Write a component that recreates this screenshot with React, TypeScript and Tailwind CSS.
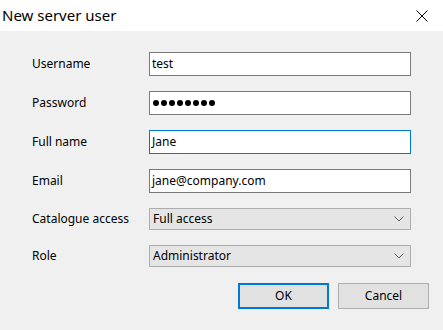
const font = { fontFamily: '"Noto Sans", "Segoe UI", sans-serif' };

function Chevron() {
    return (
        <svg width="10" height="6" viewBox="0 0 10 6" className="shrink-0">
            <polyline points="0.5,0.5 5,5 9.5,0.5" fill="none" stroke="#606060" strokeWidth="1" />
        </svg>
    );
}

function CloseIcon() {
    return (
        <svg width="12" height="12" viewBox="0 0 12 12" className="shrink-0">
            <path d="M0.5 0.5 L11.5 11.5 M11.5 0.5 L0.5 11.5" stroke="#000" strokeWidth="1" />
        </svg>
    );
}

function TextBox({ value, focused }: { value: string; focused?: boolean }) {
    return (
        <div
            className={`h-[24px] w-[262px] bg-white border flex items-center pl-[2px] text-[12px] text-black ${
                focused ? 'border-[#0078d7]' : 'border-[#7a7a7a]'
            }`}
        >
            {value}
        </div>
    );
}

function Select({ value }: { value: string }) {
    return (
        <div className="h-[22px] w-[262px] bg-[#e5e5e5] border border-[#adadad] flex items-center justify-between pl-[3px] pr-[6px] text-[12px] text-black">
            <span>{value}</span>
            <Chevron />
        </div>
    );
}

export default function App() {
    const rows = [
        { label: 'Username', field: <TextBox value="test" /> },
        {
            label: 'Password',
            field: (
                <div className="h-[24px] w-[262px] bg-white border border-[#7a7a7a] flex items-center pl-[3px] gap-[2px]">
                    {[0, 1, 2, 3, 4, 5, 6, 7].map((i) => (
                        <span key={i} className="w-[6px] h-[6px] rounded-full bg-black" />
                    ))}
                </div>
            )
        },
        { label: 'Full name', field: <TextBox value="Jane" focused /> },
        { label: 'Email', field: <TextBox value="jane@company.com" /> },
        { label: 'Catalogue access', field: <Select value="Full access" /> },
        { label: 'Role', field: <Select value="Administrator" /> }
    ];

    return (
        <div className="w-[443px] h-[330px] bg-[#f0f0f0] flex flex-col" style={font}>
            <div className="h-[31px] bg-white flex items-center justify-between pl-[2px] pr-[15px]">
                <span className="text-[15px] text-black">New server user</span>
                <CloseIcon />
            </div>

            <div className="pt-[21px] pl-[32px] grid grid-cols-[117px_262px] gap-y-[15px] items-center">
                {rows.map((row) => (
                    <div key={row.label} className="contents">
                        <span className="text-[12px] text-black">{row.label}</span>
                        {row.field}
                    </div>
                ))}
            </div>

            <div className="mt-[16px] flex justify-end gap-[9px] pr-[14px]">
                <button className="w-[91px] h-[26px] bg-[#e1e1e1] border-2 border-[#0078d7] text-[12px] text-black">
                    OK
                </button>
                <button className="w-[91px] h-[26px] bg-[#e1e1e1] border border-[#adadad] text-[12px] text-black">
                    Cancel
                </button>
            </div>
        </div>
    );
}
